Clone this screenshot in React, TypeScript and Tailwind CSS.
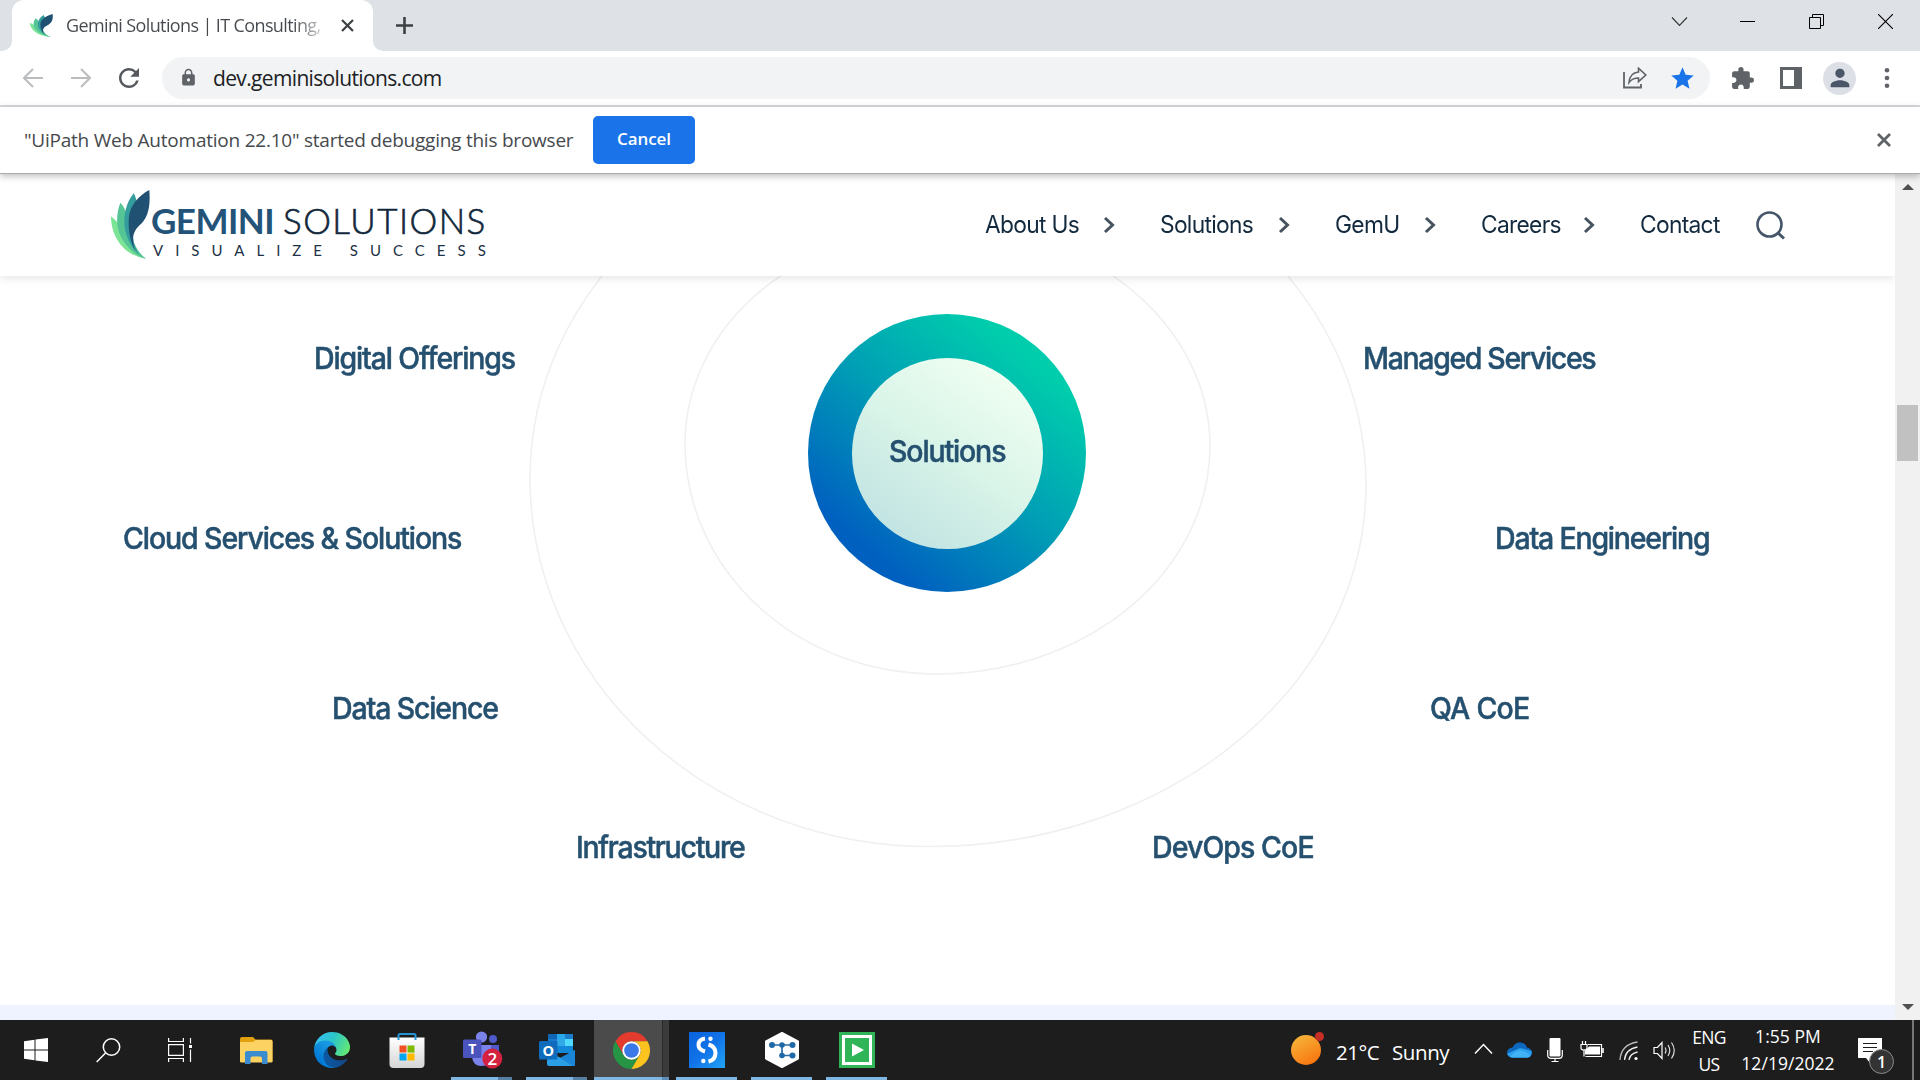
import type { ReactNode } from "react";
import { MdExtension, MdStar, MdLock, MdPerson, MdRefresh } from "react-icons/md";

function Leaf({ className }: { className: string }) {
  return (
    <svg className={className} viewBox="0 0 116 206" preserveAspectRatio="none">
      <path d="M0 78C0 120 20 190 106 206C75 195 50 150 30 110C20 95 8 85 0 78Z" fill="#7be495" />
      <path d="M28 38C15 70 14 110 30 140C55 185 85 200 106 206C80 190 60 150 52 100C48 70 40 50 28 38Z" fill="#56c596" />
      <path d="M68 10C45 35 35 80 42 120C50 155 70 182 84 194C62 160 60 120 75 80C80 55 78 30 68 10Z" fill="#329d9c" />
      <path d="M114 0C85 15 55 45 53 85C51 120 56 150 72 182C62 150 62 128 84 106C110 85 118 50 114 0Z" fill="#205072" />
    </svg>
  );
}

function TabStrip() {
  return (
    <div className="flex h-[51px] bg-[#dee1e6]">
      <div className="w-3 bg-white">
        <div className="h-full rounded-br-[10px] bg-[#dee1e6]" />
      </div>
      <div className="flex w-[361px] items-center rounded-t-[12px] bg-white pl-[18px]">
        <Leaf className="h-[23px] w-[23px]" />
        <div className="ml-[13px] w-[257px] overflow-hidden whitespace-nowrap bg-linear-to-r from-[#45494d] from-88% to-[#d5d7da] bg-clip-text text-[18px] tracking-[-0.62px] text-transparent">
          Gemini Solutions | IT Consulting,
        </div>
        <svg className="ml-[18px] h-[13px] w-[13px]" viewBox="0 0 13 13">
          <path d="M1 1L12 12M12 1L1 12" stroke="#3c4043" strokeWidth="2.2" />
        </svg>
      </div>
      <div className="w-3 bg-white">
        <div className="h-full rounded-bl-[10px] bg-[#dee1e6]" />
      </div>
      <svg className="mt-[16px] ml-[10px] h-[19px] w-[19px]" viewBox="0 0 19 19">
        <path d="M9.5 1V18M1 9.5H18" stroke="#3c4043" strokeWidth="2.6" />
      </svg>
      <svg className="mt-[16px] ml-auto h-[11px] w-[17px]" viewBox="0 0 17 11">
        <path d="M1 1.5L8.5 9.5L16 1.5" fill="none" stroke="#333" strokeWidth="1.100" />
      </svg>
      <div className="mt-[21px] ml-[52px] h-[1px] w-[15px] bg-black" />
      <svg className="mt-[14px] ml-[54px] h-[15px] w-[15px]" viewBox="0 0 15 15">
        <path d="M.5 3.5H11.5V14.5H.5ZM3.5 3.5V.5H14.5V11.5H11.5" fill="none" stroke="#000" strokeWidth="1" />
      </svg>
      <svg className="mt-[14px] mr-[27px] ml-[54px] h-[15px] w-[15px]" viewBox="0 0 15 15">
        <path d="M0 0L15 15M15 0L0 15" stroke="#000" strokeWidth="1.1" />
      </svg>
    </div>
  );
}

function Toolbar() {
  return (
    <div className="flex h-[56px] items-center border-b-2 border-[#dadce0] bg-white">
      <svg className="ml-[23px] h-5 w-5" viewBox="0 0 20 20">
        <path d="M20 10H1.5M10 1L1 10L10 19" fill="none" stroke="#babcbe" strokeWidth="2" />
      </svg>
      <svg className="ml-[28px] h-5 w-5" viewBox="0 0 20 20">
        <path d="M0 10H18.5M10 1L19 10L10 19" fill="none" stroke="#babcbe" strokeWidth="2" />
      </svg>
      <MdRefresh className="ml-[23px] h-[30px] w-[30px] text-[#55585c]" />
      <div className="ml-[18px] flex h-[42px] w-[1548px] items-center rounded-full bg-[#f1f3f4]">
        <MdLock className="mb-[1px] ml-[17px] h-[19px] w-[19px] text-[#5f6368]" />
        <div className="mt-[2px] ml-[15px] text-[21px] tracking-[-0.65px] text-[#202124]">dev.geminisolutions.com</div>
        <svg className="mr-[22px] ml-auto h-[22px] w-[24px]" viewBox="0 0 24 22">
          <path d="M1 5V20.5H18V17" fill="none" stroke="#5f6368" strokeWidth="1.8" />
          <path d="M6 15.5C6.500 9 10 5.500 15.500 5V1.200L22.800 8L15.500 14.600V11C11 11 8.500 12 6 15.500Z" fill="none" stroke="#5f6368" strokeWidth="1.600" />
        </svg>
        <MdStar className="mr-[14px] h-[27px] w-[27px] text-[#1a73e8]" />
      </div>
      <MdExtension className="ml-[20px] h-[25px] w-[25px] text-[#5f6368]" />
      <svg className="ml-[25px] h-[22px] w-[22px]" viewBox="0 0 22 22">
        <path d="M0 0H22V22H0ZM3 3V19H14V3Z" fill="#5f6368" fillRule="evenodd" />
      </svg>
      <div className="ml-[21px] flex h-[33px] w-[33px] items-center justify-center rounded-full bg-[#dcdfe6]">
        <MdPerson className="h-[28px] w-[28px] text-[#4b5568]" />
      </div>
      <svg className="ml-[28px] h-[22px] w-[6px]" viewBox="0 0 6 22">
        <circle cx="3" cy="3.300" r="2.300" fill="#5f6368" />
        <circle cx="3" cy="11" r="2.300" fill="#5f6368" />
        <circle cx="3" cy="18.700" r="2.300" fill="#5f6368" />
      </svg>
    </div>
  );
}

function DebugBar() {
  return (
    <div className="relative z-20 flex h-[67px] items-center border-b border-[#a9adac] bg-white pb-[1px] shadow-[0_2px_7px_rgba(0,0,0,0.28)]">
      <div className="w-[593px] pt-[2px] pl-[24px] text-[19px] tracking-[-0.23px] whitespace-nowrap text-[#45494d]">
        "UiPath Web Automation 22.10" started debugging this browser
      </div>
      <button className="h-[48px] w-[102px] rounded-[5px] bg-[#1a73e8] pb-[1px] text-[17px] font-semibold tracking-[-0.1px] text-white">
        Cancel
      </button>
      <svg className="mr-[29px] ml-auto h-[14px] w-[14px]" viewBox="0 0 14 14">
        <path d="M1 1L13 13M13 1L1 13" stroke="#5f6368" strokeWidth="2.800" />
      </svg>
    </div>
  );
}

const nav = [
  { label: "About Us", width: "w-[118px]" },
  { label: "Solutions", width: "w-[118px]" },
  { label: "GemU", width: "w-[89px]" },
  { label: "Careers", width: "w-[102px]" },
];

function SiteHeader() {
  return (
    <div className="relative z-10 flex h-[102px] bg-white shadow-[0_1px_10px_rgba(0,0,0,0.13)]">
      <Leaf className="mt-[16px] ml-[111px] h-[69px] w-[39px]" />
      <div className="ml-[1px] font-['Lato']">
        <div className="mt-[25px] flex text-[35px] leading-[42px]">
          <div className="w-[132px] font-bold tracking-[-0.55px] text-[#235379]">GEMINI</div>
          <div className="tracking-[1.450px] text-[#11273b] font-light [-webkit-text-stroke:0.600px_#11273b]">SOLUTIONS</div>
        </div>
        <div className="ml-[2px] text-[15px] leading-[18px] tracking-[12px] whitespace-nowrap text-[#1c3247]">VISUALIZE SUCCESS</div>
      </div>
      <div className="absolute left-[985px] flex h-[102px] items-center font-['Inter'] text-[24px] text-[#132a3e]">
        {nav.map((n) => (
          <div key={n.label} className="flex items-center">
            <div className={`${n.width} origin-left scale-x-[0.95] tracking-[-0.75px] whitespace-nowrap`}>{n.label}</div>
            <svg className="mr-[45px] h-[18px] w-[12px]" viewBox="0 0 12 18">
              <path d="M2 2L9.500 9L2 16" fill="none" stroke="#46525f" strokeWidth="3" />
            </svg>
          </div>
        ))}
        <div className="w-[116px] origin-left scale-x-[0.95] tracking-[-0.75px]">Contact</div>
        <svg className="h-[29px] w-[30px]" viewBox="0 0 30 29">
          <circle cx="13.500" cy="13.500" r="12" fill="none" stroke="#46566a" strokeWidth="2.600" />
          <path d="M21.500 21.500L28 27.500" stroke="#46566a" strokeWidth="3" />
        </svg>
      </div>
    </div>
  );
}

const services = [
  { name: "Digital Offerings", at: "left-[314px] top-[62.5px] tracking-[-1.2px]" },
  { name: "Managed Services", at: "left-[1363px] top-[62.5px] tracking-[-1.420px]" },
  { name: "Cloud Services & Solutions", at: "left-[122.500px] top-[242.500px] tracking-[-1.150px]" },
  { name: "Data Engineering", at: "left-[1495px] top-[242.500px] tracking-[-1.250px]" },
  { name: "Data Science", at: "left-[332px] top-[412.500px] tracking-[-1.200px]" },
  { name: "QA CoE", at: "left-[1430px] top-[412.500px] tracking-[-0.800px]" },
  { name: "Infrastructure", at: "left-[576px] top-[551.500px] tracking-[-1.350px]" },
  { name: "DevOps CoE", at: "left-[1152px] top-[551.500px] tracking-[-0.970px]" },
];

function SolutionsMap() {
  return (
    <div className="relative h-[729px] overflow-hidden bg-white font-['Inter'] text-[30px] leading-[38px] font-medium text-[#25506f] [-webkit-text-stroke:0.500px_#25506f]">
      <svg className="absolute top-0 left-0 h-[729px] w-[1895px]" viewBox="0 276 1895 729">
        <g fill="none" stroke="#f0f0f0" strokeWidth="1.600">
          <path d="M930 119A436 366 0 0 1 1366 485A436 361.500 0 0 1 930 846.500A400 368.500 0 0 1 530 478A400 353 0 0 1 930 125" />
          <path d="M936 223A274 223 0 0 1 1210 446A274 228 0 0 1 936 674A251 230 0 0 1 685 444A251 214 0 0 1 936 230" />
        </g>
      </svg>
      <div className="absolute top-[38px] left-[808px] flex h-[278px] w-[278px] items-center justify-center rounded-full bg-[linear-gradient(220deg,#00cdac_18%,#009fb5_48%,#0060c0_82%)]">
        <div className="flex h-[191px] w-[191px] items-center justify-center rounded-full bg-[linear-gradient(214deg,#f0fff2_12%,#d9f4e8_50%,#bfe2e2_90%)] pb-[4px]">
          <span className="scale-x-[0.95] tracking-[-1.200px]">Solutions</span>
        </div>
      </div>
      {services.map((s) => (
        <div key={s.name} className={`absolute origin-left scale-x-[0.95] whitespace-nowrap ${s.at}`}>
          {s.name}
        </div>
      ))}
    </div>
  );
}

function ScrollBar() {
  return (
    <div className="relative z-10 flex w-[25px] flex-col items-center bg-[#f1f1f1]">
      <svg className="mt-[10px] h-[6px] w-[12px]" viewBox="0 0 12 6"><path d="M0 6L6 0L12 6Z" fill="#505050" /></svg>
      <div className="mt-[215px] h-[56px] w-[21px] bg-[#c1c1c1]" />
      <svg className="mt-auto mb-[10px] h-[6px] w-[12px]" viewBox="0 0 12 6"><path d="M0 0L6 6L12 0Z" fill="#505050" /></svg>
    </div>
  );
}

function Cell({ children, state, extra }: { children: ReactNode; state?: "open" | "active"; extra?: boolean }) {
  return (
    <div className="flex h-[60px] w-[75px] flex-col items-center">
      <div className={state === "active" ? "flex w-full flex-1 bg-[#4b4b4b]" : "flex w-full flex-1"}>
        <div className="flex flex-1 items-center justify-center pt-[3px]">
          <div className={state === "active" ? "translate-x-[3px]" : ""}>{children}</div>
        </div>
        {state === "active" && <div className="w-[7px] border-l border-[#2a2a2a] bg-[#3b3b3b]" />}
      </div>
      <div className={state === "active" ? "flex h-[3px] w-full" : "flex h-[3px] w-[61px]"}>
        {state && <div className="flex-1 bg-[#80b6e2]" />}
        {extra && <div className={state === "active" ? "w-[7px] bg-[#5d8db5]" : "w-[14px] bg-[#577fa1]"} />}
      </div>
    </div>
  );
}

function StartCell({ children }: { children: ReactNode }) {
  return <div className="flex h-[60px] w-[72px] items-center justify-center">{children}</div>;
}

function Edge() {
  return (
    <svg className="h-9 w-9" viewBox="0 0 256 256">
      <defs>
        <linearGradient id="e1" x1="60" y1="177" x2="241" y2="177" gradientUnits="userSpaceOnUse">
          <stop stopColor="#0c59a4" /><stop offset="1" stopColor="#114a8b" />
        </linearGradient>
        <linearGradient id="e2" x1="157" y1="100" x2="46" y2="221" gradientUnits="userSpaceOnUse">
          <stop stopColor="#1b9de2" /><stop offset=".3" stopColor="#1595df" /><stop offset="1" stopColor="#0078d4" />
        </linearGradient>
        <linearGradient id="e3" x1="20" y1="40" x2="250" y2="150" gradientUnits="userSpaceOnUse">
          <stop stopColor="#35c1f1" /><stop offset=".45" stopColor="#2cc5c9" /><stop offset="1" stopColor="#66eb6e" />
        </linearGradient>
      </defs>
      <g transform="translate(-4.630 -4.920)">
        <path fill="url(#e1)" d="M235.680 195.460a93.730 93.730 0 0 1-10.540 4.710 101.870 101.870 0 0 1-35.900 6.460c-47.320 0-88.540-32.550-88.540-74.320A31.480 31.480 0 0 1 117.130 105c-42.800 1.800-53.800 46.400-53.800 72.530 0 73.880 68.090 81.370 82.760 81.370 7.910 0 19.840-2.300 27-4.560l1.310-.44a128.340 128.340 0 0 0 66.600-52.800 4 4 0 0 0-5.320-5.640z" />
        <path fill="url(#e2)" d="M110.340 246.340A79.200 79.200 0 0 1 87.600 225a80.720 80.720 0 0 1 29.530-120c3.120-1.470 8.450-4.130 15.540-4a32.350 32.350 0 0 1 25.690 13 31.880 31.880 0 0 1 6.360 18.660c0-.21 24.460-79.600-80-79.600-43.900 0-80 41.660-80 78.210a130.150 130.150 0 0 0 12.110 56 128 128 0 0 0 156.380 67.110 75.550 75.550 0 0 1-62.780-8z" />
        <path fill="url(#e3)" d="M156.940 153.780c-.81 1.050-3.300 2.500-3.300 5.660 0 2.610 1.700 5.120 4.720 7.230 14.380 10 41.490 8.680 41.560 8.680a59.560 59.560 0 0 0 30.270-8.350A61.380 61.380 0 0 0 260.630 114c.26-22.410-8-37.310-11.340-43.910C228.100 28.680 182.370 4.920 132.630 4.920a128 128 0 0 0-128 126.200c.48-36.540 36.800-66.050 80-66.050 3.500 0 23.460.34 42 10.070 16.340 8.580 24.900 18.940 30.850 29.210 6.180 10.670 7.280 24.150 7.280 29.520s-2.740 13.330-7.820 19.910z" />
      </g>
    </svg>
  );
}

function Explorer() {
  return (
    <svg className="h-[27px] w-[33px]" viewBox="0 0 33 27">
      <path d="M0 2Q0 0 2 0H13L15.500 2.500H31Q32.500 2.500 32.500 4V25H0Z" fill="#e0a010" />
      <path d="M0 5H13L15.500 3H31Q32.500 3 32.500 4.500V24Q32.500 25.500 31 25.500H1.500Q0 25.500 0 24Z" fill="#fcd362" />
      <path d="M5 27V16Q5 14 7 14H25.500Q27.500 14 27.500 16V27H22V21.500Q22 19.500 20 19.500H12.500Q10.500 19.500 10.500 21.500V27Z" fill="#3a8bd0" />
    </svg>
  );
}

function Store() {
  return (
    <svg className="h-[36px] w-[36px]" viewBox="0 0 36 36">
      <defs><linearGradient id="st" x2="0" y2="1"><stop stopColor="#fff" /><stop offset="1" stopColor="#d5d5d5" /></linearGradient></defs>
      <path d="M.5 5.500H35.500V32Q35.500 36 31.500 36H4.500Q.5 36 .5 32Z" fill="url(#st)" />
      <path d="M9.500 8V3.500Q9.500 2 11 2H25Q26.500 2 26.500 3.500V8" fill="none" stroke="#2494d5" strokeWidth="2" />
      <path d="M10.500 13.500h7v7h-7z" fill="#f25022" /><path d="M18.500 13.500h7v7h-7z" fill="#7fba00" />
      <path d="M10.500 21.500h7v7h-7z" fill="#00a4ef" /><path d="M18.500 21.500h7v7h-7z" fill="#ffb900" />
    </svg>
  );
}

function Teams() {
  return (
    <svg className="h-[40px] w-[40px] translate-x-[1px] overflow-visible font-['Open_Sans']" viewBox="0 0 40 40">
      <circle cx="30" cy="9" r="4" fill="#5059c9" />
      <path d="M26 15H36V25Q35 30 29 30H26Z" fill="#5059c9" />
      <circle cx="18.500" cy="7" r="5.600" fill="#7b83eb" />
      <path d="M9 15H28V27Q27 36 18.500 36Q10 36 9 27Z" fill="#7b83eb" />
      <rect x="0" y="9.500" width="18.500" height="18.500" rx="1.500" fill="#4b53bc" />
      <text x="9.200" y="24" fontSize="14" fontWeight="700" textAnchor="middle" fill="#fff">T</text>
      <circle cx="29.300" cy="28.500" r="10" fill="#d3213f" />
      <text x="29.300" y="34.500" fontSize="17" fontWeight="600" textAnchor="middle" fill="#fff">2</text>
    </svg>
  );
}

function Outlook() {
  return (
    <svg className="h-[34px] w-[36px] font-['Open_Sans']" viewBox="0 0 36 34">
      <path d="M9 2Q9 1 10 1H33Q34 1 34 2V20H9Z" fill="#1066b5" />
      <path d="M9 6H18V18H9Z" fill="#1a79ca" /><path d="M18 1H26V6H18Z" fill="#28a8ea" /><path d="M26 6H34V13H26Z" fill="#50d9ff" />
      <path d="M18 6H26V13H18Z" fill="#32a9e7" /><path d="M18 13H34V20H18Z" fill="#1488d8" /><path d="M26 1H34V6H26Z" fill="#1d7dcb" />
      <path d="M8 18L22 25L36 17V32Q36 33 35 33H10Q8 33 8 31Z" fill="#2a9fe5" />
      <path d="M21 25L36 17V31.500Q36 33 34 33Z" fill="#1b86d8" />
      <rect x="0" y="8" width="18.500" height="18.500" rx="1.500" fill="#0f6cbd" />
      <text x="9.200" y="22.500" fontSize="14.500" fontWeight="700" textAnchor="middle" fill="#fff">O</text>
    </svg>
  );
}

function Chrome() {
  return (
    <svg className="h-[37px] w-[37px]" viewBox="0 0 48 48">
      <path fill="#e33b2e" d="M24 12H44.780A24 24 0 0 0 3.210 12L13.610 30A12 12 0 0 1 24 12Z" />
      <path fill="#259545" d="M13.610 30L3.210 12A24 24 0 0 0 24 48L34.390 30A12 12 0 0 1 13.610 30Z" />
      <path fill="#fcc31e" d="M34.390 30L24 48A24 24 0 0 0 44.780 12H24A12 12 0 0 1 34.390 30Z" />
      <circle cx="24" cy="24" r="12" fill="#fff" /><circle cx="24" cy="24" r="9.500" fill="#3b78e7" />
    </svg>
  );
}

function Studio() {
  return (
    <svg className="h-9 w-9" viewBox="0 0 36 36">
      <defs><linearGradient id="sg" x1="0" x2="1" y2="1"><stop stopColor="#0a62dc" /><stop offset=".5" stopColor="#1273e8" /><stop offset="1" stopColor="#21a5f5" /></linearGradient></defs>
      <path d="M0 0H36V36H0Z" fill="url(#sg)" />
      <path d="M16 6.500Q9.500 7.500 9.500 13Q9.500 17.500 16 19.500" fill="none" stroke="#fff" strokeWidth="4" />
      <path d="M19.500 12.500Q26.500 14.500 26.500 21Q26.500 28 19.500 29.500" fill="none" stroke="#fff" strokeWidth="4" />
      <circle cx="21.500" cy="6.800" r="2.200" fill="#fff" /><circle cx="14.300" cy="29" r="2.200" fill="#fff" />
    </svg>
  );
}

function Orchestrator() {
  return (
    <svg className="h-9 w-9" viewBox="0 0 36 36">
      <path d="M18 1L34 9.500V26.500L18 35L2 26.500V9.500Z" fill="#fff" stroke="#fff" strokeWidth="2" strokeLinejoin="round" />
      <path d="M8 13H28M18 13V23.500H28" fill="none" stroke="#2a6ea8" strokeWidth="1.700" />
      <g fill="#2069a8"><circle cx="8" cy="13" r="3" /><circle cx="18" cy="13" r="2.800" /><circle cx="28.500" cy="13" r="3" /><circle cx="18" cy="23.500" r="2.800" /><circle cx="28.500" cy="23.500" r="3" /></g>
    </svg>
  );
}

function Player() {
  return (
    <svg className="h-9 w-9" viewBox="0 0 36 36">
      <path d="M0 0H36V36H0Z" fill="#2fb457" />
      <path d="M4.500 4.500H31.500V31.500H4.500Z" fill="#2fb457" stroke="#fff" strokeWidth="3" />
      <path d="M13 11.500L25 18L13 24.500Z" fill="#fff" />
    </svg>
  );
}

function Tray() {
  return (
    <div className="ml-auto flex h-[60px] text-white">
      <svg className="mt-[12px] h-[34px] w-[34px]" viewBox="0 0 34 34">
        <defs><linearGradient id="sun" x1=".2" x2=".8" y2="1"><stop stopColor="#f5b53a" /><stop offset="1" stopColor="#f9720e" /></linearGradient></defs>
        <circle cx="15" cy="18" r="15" fill="url(#sun)" /><circle cx="28.500" cy="4.500" r="4.500" fill="#c62f26" />
      </svg>
      <div className="mt-[16px] ml-[11px] w-[56px] text-[20.500px] leading-[32px] tracking-[-0.5px]">21°C</div>
      <div className="mt-[16px] w-[57px] text-[20.500px] leading-[32px] tracking-[-0.4px]">Sunny</div>
      <svg className="mt-[23px] ml-[25px] h-[12px] w-[19px]" viewBox="0 0 19 12"><path d="M1 10.500L9.500 1.500L18 10.500" fill="none" stroke="#fff" strokeWidth="1.500" /></svg>
      <svg className="mt-[22px] ml-[14px] h-[16px] w-[25px]" viewBox="0 0 25 16">
        <path d="M5 15.500Q0 15 0 10.500Q.5 6 5.500 5.500Q8 .5 13 .5Q18 .5 20 5.500Q25 6.500 25 11Q24.500 15.500 20 15.500Z" fill="#0d68be" />
        <path d="M5 15.500Q1 15 .5 11.500L13 6L24.500 9Q25.500 14.500 20 15.500Z" fill="#2ba0ec" />
        <path d="M3 15Q8 8.500 13 8.500Q19 8.500 23.500 14Q22 15.500 20 15.500H5Z" fill="#42b4f5" />
      </svg>
      <svg className="mt-[18px] ml-[15px] h-[24px] w-[16px]" viewBox="0 0 16 24">
        <rect x="2.500" width="11" height="18.500" rx="1" fill="#fff" />
        <path d="M.7 12V17Q.7 20.300 4 20.300H12Q15.300 20.300 15.300 17V12M8 20V23.500M4.500 23.500H11.500" fill="none" stroke="#fff" strokeWidth="1.200" />
      </svg>
      <svg className="mt-[20px] ml-[17px] h-[18px] w-[24px]" viewBox="0 0 24 18">
        <path d="M8 4.500H21.500V16.500H5.500" fill="none" stroke="#fff" strokeWidth="1.200" /><path d="M9 6.500H20V14.500H5V11Z" fill="#fff" />
        <path d="M23 8V13" stroke="#fff" strokeWidth="1.600" /><path d="M1 4.500H7V8Q7 10 4 10Q1 10 1 8ZM2.500 4.500V1M5.500 4.500V1M4 10V16.500" fill="none" stroke="#fff" strokeWidth="1.200" />
      </svg>
      <svg className="mt-[21px] ml-[15px] h-[20px] w-[20px]" viewBox="0 0 20 20">
        <g fill="none" stroke="#bbb" strokeWidth="1.300"><path d="M1 19Q2 3.500 18.500 1" /><path d="M5.500 19Q6.500 8 18.500 6" stroke="#eee" /><path d="M10 19Q11 12.500 18.500 11" stroke="#eee" /></g>
        <circle cx="17" cy="17.500" r="1.600" fill="#fff" />
      </svg>
      <svg className="mt-[21px] ml-[14px] h-[19px] w-[23px]" viewBox="0 0 23 19">
        <path d="M1 6.500H4.500L9 1.500V17.500L4.500 12.500H1Z" fill="none" stroke="#fff" strokeWidth="1.200" />
        <path d="M12 6.500Q14 9.500 12 12.500M15 4Q18.500 9.500 15 15M18.500 1.500Q24 9.500 18.500 17.500" fill="none" stroke="#ddd" strokeWidth="1.200" />
      </svg>
      <div className="mt-[4px] ml-[9px] w-[48px] text-center text-[17.500px] leading-[27px] tracking-[-0.7px]">ENG<br />US</div>
      <div className="mt-[3px] ml-[5px] w-[100px] text-center text-[17.500px] leading-[27px] tracking-[0.05px]">1:55 PM<br />12/19/2022</div>
      <div className="relative mt-[18px] ml-[20px] w-[36px]">
        <svg className="h-[25px] w-[25px]" viewBox="0 0 25 25"><path d="M0 0H24V20H17L12 25L8 20H0Z" fill="#fff" /><path d="M5 5.500H19M5 9.500H19M5 13.500H15" stroke="#1d1d1d" strokeWidth="1.200" /></svg>
        <div className="absolute top-[11px] left-[11px] flex h-[25px] w-[25px] items-center justify-center rounded-full border border-[#8a8a8a] bg-[#333] text-[16px] font-semibold">1</div>
      </div>
      <div className="mr-[6px] ml-[18px] w-[2px] bg-[#777]" />
    </div>
  );
}

function Taskbar() {
  return (
    <div className="flex h-[60px] bg-[#1d1d1d]">
      <StartCell>
        <svg className="h-6 w-6" viewBox="0 0 24 24"><path d="M0 3.200L10.500 1.700V11.400H0ZM11.500 1.500L24 0V11.400H11.500ZM0 12.400H10.500V22.300L0 20.800ZM11.500 12.400H24V24L11.500 22.400Z" fill="#fff" /></svg>
      </StartCell>
      <StartCell>
        <svg className="h-[25px] w-[25px]" viewBox="0 0 25 25"><circle cx="15.500" cy="9" r="8.200" fill="none" stroke="#fff" strokeWidth="1.500" /><path d="M9.500 15L.7 24" stroke="#fff" strokeWidth="1.500" /></svg>
      </StartCell>
      <StartCell>
        <svg className="h-[24px] w-[24px]" viewBox="0 0 24 24">
          <path d="M.6 0V3.500H15.400V0M.6 6.600H15.400V17.400H.6ZM.6 24V20.500H15.400V24M22.500 0V24" fill="none" stroke="#fff" strokeWidth="1.200" />
          <path d="M21 5.500H24V11.500H21Z" fill="#1d1d1d" /><path d="M21 7H24V10H21Z" fill="#fff" />
        </svg>
      </StartCell>
      <div className="w-[3px]" />
      <Cell><Explorer /></Cell>
      <Cell><Edge /></Cell>
      <Cell><Store /></Cell>
      <Cell state="open" extra><Teams /></Cell>
      <Cell state="open" extra><Outlook /></Cell>
      <Cell state="active" extra><Chrome /></Cell>
      <Cell state="open"><Studio /></Cell>
      <Cell state="open"><Orchestrator /></Cell>
      <Cell state="open"><Player /></Cell>
      <Tray />
    </div>
  );
}

export default function App() {
  return (
    <div className="flex h-[1080px] w-[1920px] flex-col overflow-hidden bg-white font-['Open_Sans',sans-serif]">
      <TabStrip />
      <Toolbar />
      <DebugBar />
      <div className="flex h-[846px]">
        <div className="w-[1895px]">
          <SiteHeader />
          <SolutionsMap />
          <div className="h-[15px] bg-[#eff2ff]" />
        </div>
        <ScrollBar />
      </div>
      <Taskbar />
    </div>
  );
}
